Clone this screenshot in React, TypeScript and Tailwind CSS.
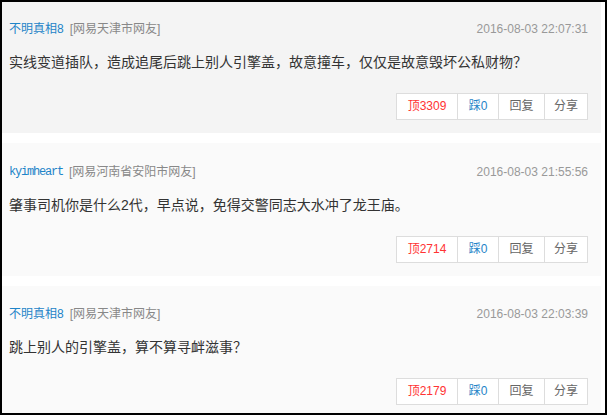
import React from "react"

type Comment = {
  user: string
  mono?: boolean
  from: string
  time: string
  text: string
  up: number
  down: number
  bg: string
  pt: string
}

const comments: Comment[] = [
  {
    user: "不明真相8",
    from: "[网易天津市网友]",
    time: "2016-08-03 22:07:31",
    text: "实线变道插队，造成追尾后跳上别人引擎盖，故意撞车，仅仅是故意毁坏公私财物？",
    up: 3309,
    down: 0,
    bg: "bg-[#f4f4f4]",
    pt: "pt-[18px]",
  },
  {
    user: "kyimheart",
    mono: true,
    from: "[网易河南省安阳市网友]",
    time: "2016-08-03 21:55:56",
    text: "肇事司机你是什么2代，早点说，免得交警同志大水冲了龙王庙。",
    up: 2714,
    down: 0,
    bg: "bg-[#fafafa]",
    pt: "pt-[20px]",
  },
  {
    user: "不明真相8",
    from: "[网易天津市网友]",
    time: "2016-08-03 22:03:39",
    text: "跳上别人的引擎盖，算不算寻衅滋事？",
    up: 2179,
    down: 0,
    bg: "bg-[#fafafa]",
    pt: "pt-[19px]",
  },
]

function CommentCard({ c }: { c: Comment }) {
  return (
    <div className={`${c.bg} ${c.pt} mr-[4px] pl-[7px] pr-[13px] pb-[13px]`}>
      {/* header: user + location, time */}
      <div className="flex h-[18px] items-center justify-between text-[12px] leading-[18px]">
        <div className="flex items-center">
          {c.mono ? (
            <span className="font-['Liberation_Mono',monospace] tracking-[-1.2px] text-[#1e84c8]">
              {c.user}
            </span>
          ) : (
            <span className="text-[#1e84c8]">{c.user}</span>
          )}
          <span className="ml-[6px] text-[#888]">{c.from}</span>
        </div>
        <span className="font-['Liberation_Sans',sans-serif] text-[#999]">{c.time}</span>
      </div>

      <p className="mt-[13px] text-[14px] leading-[22px] text-[#333]">{c.text}</p>

      {/* actions */}
      <div className="mt-[20px] flex justify-end">
        <div className="flex h-[27px] border border-[#ddd] bg-white text-[12px] leading-[25px]">
          <button className="w-[60px] text-[#f33]">顶{c.up}</button>
          <button className="w-[41px] border-l border-[#ddd] text-[#1e84c8]">踩{c.down}</button>
          <button className="w-[46px] border-l border-[#ddd] text-[#666]">回复</button>
          <button className="w-[43px] border-l border-[#ddd] text-[#666]">分享</button>
        </div>
      </div>
    </div>
  )
}

export default function App() {
  return (
    <div className="h-[415px] w-[607px] overflow-hidden border-2 border-black bg-white font-['Liberation_Sans','Noto_Sans_CJK_SC',sans-serif]">
      <div className="flex flex-col gap-[10px]">
        {comments.map((c, i) => (
          <CommentCard key={i} c={c} />
        ))}
      </div>
    </div>
  )
}
